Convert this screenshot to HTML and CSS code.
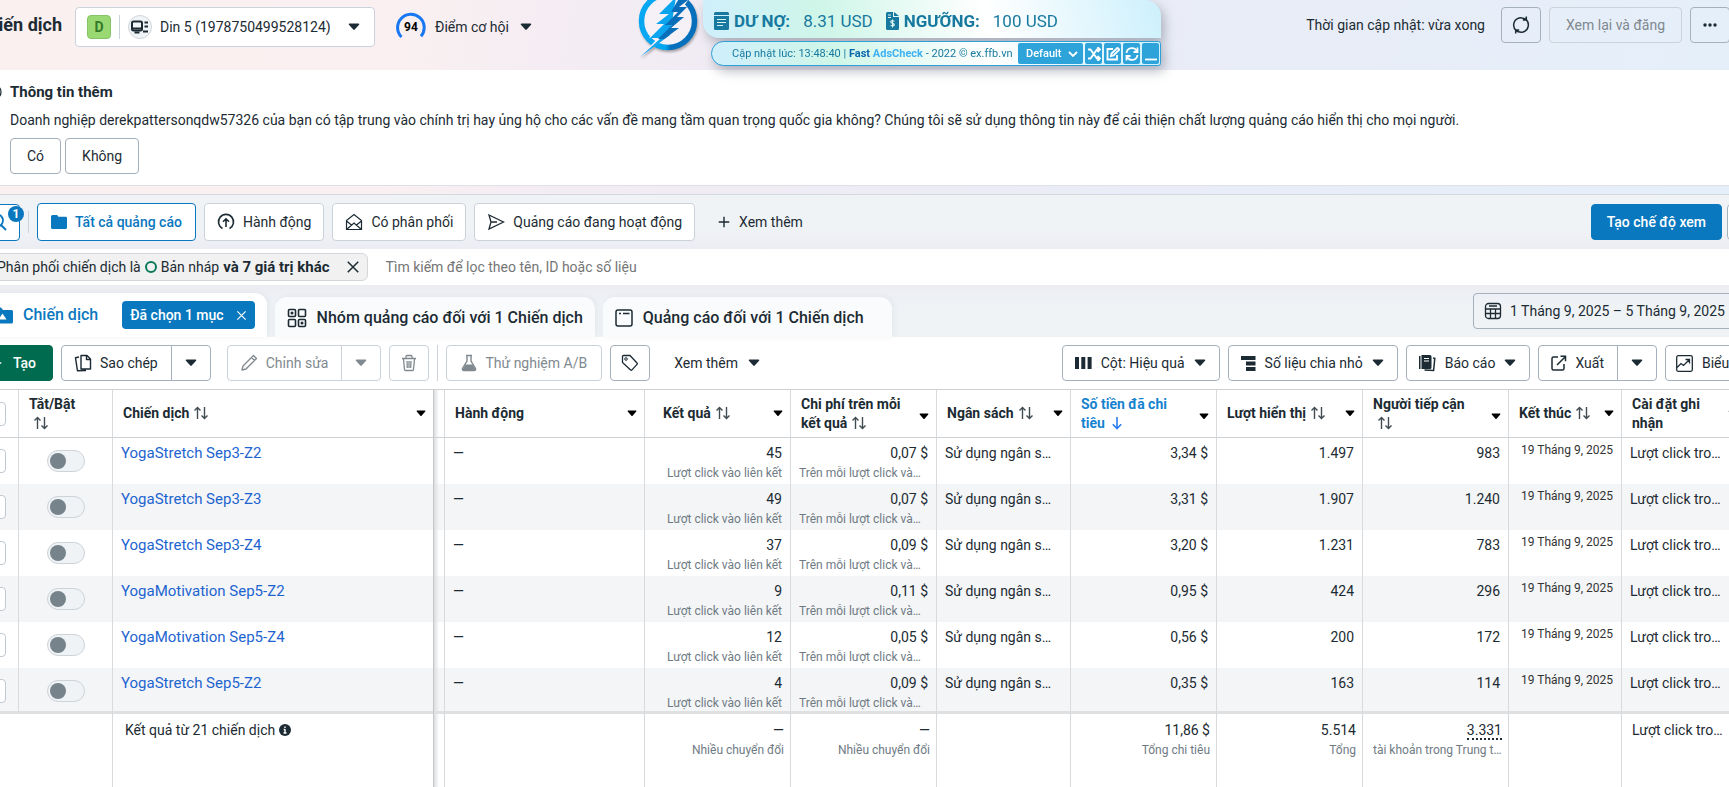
FILE: index.html
```html
<!DOCTYPE html>
<html lang="vi">
<head>
<meta charset="utf-8">
<title>Chiến dịch</title>
<link rel="stylesheet" href="styles.css">
</head>
<body>
<svg class="defs" aria-hidden="true">
  <symbol id="caret" viewBox="0 0 12 8"><path d="M1.5 0.5h9c.7 0 1 .8.6 1.2L6.7 6.6c-.4.4-1 .4-1.4 0L.9 1.7C.5 1.3.8.5 1.5.5z" fill="currentColor"/></symbol>
  <symbol id="sort" viewBox="0 0 16 16"><path d="M4.5 14V2.5M1.5 5.5l3-3 3 3M11.5 2v11.5M8.5 10.500l3 3 3-3" fill="none" stroke="currentColor" stroke-width="1.400"/></symbol>
  <symbol id="down" viewBox="0 0 16 16"><path d="M8 2v11.500M3.800 9.300L8 13.500l4.200-4.200" fill="none" stroke="currentColor" stroke-width="1.600"/></symbol>
  <symbol id="close" viewBox="0 0 16 16"><path d="M2 2l12 12M14 2L2 14" fill="none" stroke="currentColor" stroke-width="1.700"/></symbol>
  <symbol id="plus" viewBox="0 0 16 16"><path d="M8 2v12M2 8h12" fill="none" stroke="currentColor" stroke-width="1.600"/></symbol>
</svg>
<div class="viewport">
<div class="page">
  <header class="topbar">
    <h1>Chiến dịch</h1>
    <button class="account" type="button">
      <span class="avatar">D</span>
      <span class="rule"></span>
      <span class="kind"><svg width="18" height="14" viewBox="0 0 18 14"><rect x="1" y="1.500" width="10" height="9" rx="1.500" fill="none" stroke="currentColor" stroke-width="2"/><path d="M1 8.500h10M3.500 12.500h5M13.500 2.500h3.500M13.500 6.500h3.500M12 11.500h5" stroke="currentColor" stroke-width="1.800"/></svg></span>
      <span>Din 5 (1978750499528124)</span>
      <svg class="caret"><use href="#caret"/></svg>
    </button>
    <button class="score" type="button">
      <span class="dial"><svg width="30" height="30" viewBox="0 0 30 30"><path d="M5.500 25A13.300 13.300 0 1 1 25 24.200" fill="none" stroke="#1877f2" stroke-width="3"/></svg><b>94</b></span>
      <span>Điểm cơ hội</span>
      <svg class="caret"><use href="#caret"/></svg>
    </button>
    <div class="topbar-end">
      <span class="updated">Thời gian cập nhật: vừa xong</span>
      <button class="btn ghost square" type="button" aria-label="Làm mới"><svg width="18" height="18" viewBox="0 0 18 18"><path d="M4.500 14.800A7.300 7.300 0 0 1 7 2M13.500 3.200A7.300 7.300 0 0 1 11 16M10 1.900a7.300 7.300 0 0 1 3.500 1.300M8 16.100a7.300 7.300 0 0 1-3.500-1.300M7 2a7.300 7.300 0 0 1 3-.1M11 16a7.300 7.300 0 0 1-3 .1M14.300.500v3.600h-3.500M3.700 17.500v-3.600h3.500" fill="none" stroke="currentColor" stroke-width="1.500"/></svg></button>
      <button class="btn ghost light" type="button" disabled>Xem lại và đăng</button>
      <button class="btn ghost square" type="button" aria-label="Thêm"><svg width="14" height="4" viewBox="0 0 14 4"><circle cx="2" cy="2" r="1.700"/><circle cx="7" cy="2" r="1.700"/><circle cx="12" cy="2" r="1.700"/></svg></button>
    </div>
  </header>

  <aside class="checker">
    <svg class="logo" width="66" height="62" viewBox="636 0 66 62">
      <defs><linearGradient id="ring"><stop offset="0.450" stop-color="#05a7f2"/><stop offset="0.550" stop-color="#0670bd"/></linearGradient></defs>
      <circle cx="668" cy="21" r="26.500" fill="#f6f1f6" stroke="url(#ring)" stroke-width="5.500"/>
      <path d="M679-4L657 15h9l-12 10h7l-12 13h9L640 57l31-23h-6l15-9h-8l12-9h-7l14-20z" fill="#f6f1f6"/>
      <path d="M676-3L659 14h10L656 24h8l-14 14h11L640 57l30-22z" fill="#0ba5ef"/>
      <path d="M692-3H680l-9 15h7l-13 13h7L658 39h6L640 57l39-29h-8l13-11h-7l10-10h-8z" fill="#0a6db8"/>
    </svg>
    <div class="checker-panels">
      <div class="debt">
        <svg width="15" height="18" viewBox="0 0 15 18"><path d="M0 1.500Q0 0 1.500 0h12Q15 0 15 1.500V3H0zM0 4h15v12.500q0 1.500-1.500 1.500h-12Q0 18 0 16.500z" fill="currentColor"/><path d="M3 7.500h9M3 10.500h9M3 13.500h6" stroke="#d9f5f3" stroke-width="1.200"/></svg>
        <b>DƯ NỢ:</b><span>8.31 USD</span>
        <svg width="13" height="18" viewBox="0 0 13 18"><path d="M1.500 0H7v5h6v11.500q0 1.500-1.500 1.500h-10Q0 18 0 16.500v-15Q0 0 1.500 0zM8 0l5 4H8z" fill="currentColor"/><path d="M2 3h3M2 5.500h3M8.500 9.200Q5 8 4.700 9.800 4.700 11 6.500 11.400 8.500 11.900 8.300 13q-.5 1.500-3.800.4M6.500 7.500v8" fill="none" stroke="#e4f9f2" stroke-width="1.100"/></svg>
        <b>NGƯỠNG:</b><span>100 USD</span>
      </div>
      <div class="checker-bar">
        <span>Cập nhật lúc: 13:48:40 | <b>Fast <i>AdsCheck</i></b> - 2022 © ex.ffb.vn</span>
        <select aria-label="Chế độ"><option>Default</option></select>
        <button type="button" aria-label="Trộn"><svg viewBox="0 0 14 14"><path d="M1 2.500h2.500l6.500 9h3M1 11.500h2.500l6.500-9h3M10.500 0L13 2.500 10.500 5M10.500 9l2.500 2.500-2.500 2.500"/></svg></button>
        <button type="button" aria-label="Sửa"><svg viewBox="0 0 14 14"><path d="M7 2H1.500v10.500H11V8M5 9l.5-2.500L11.500.8l1.800 1.800L7.500 8.500z"/></svg></button>
        <button type="button" aria-label="Tải lại"><svg viewBox="0 0 14 14"><path d="M1.500 6A5.500 5.500 0 0 1 11.800 4M12.500 8A5.500 5.500 0 0 1 2.200 10M12.500.5V5H8.500M1.500 13.500V9h4"/></svg></button>
        <button type="button" aria-label="Thu nhỏ"><svg viewBox="0 0 14 14"><path d="M1 12.500h12"/></svg></button>
      </div>
    </div>
  </aside>

  <section class="notice">
    <svg class="info" width="16" height="16" viewBox="0 0 16 16"><circle cx="8" cy="8" r="7" fill="none" stroke="currentColor" stroke-width="1.300"/><path d="M8 7v4.500M8 4.200v1.300" stroke="currentColor" stroke-width="1.400"/></svg>
    <div>
      <h2>Thông tin thêm</h2>
      <p>Doanh nghiệp derekpattersonqdw57326 của bạn có tập trung vào chính trị hay ủng hộ cho các vấn đề mang tầm quan trọng quốc gia không? Chúng tôi sẽ sử dụng thông tin này để cải thiện chất lượng quảng cáo hiển thị cho mọi người.</p>
      <div class="answers"><button class="btn" type="button">Có</button><button class="btn" type="button">Không</button></div>
    </div>
  </section>

  <nav class="views">
    <button class="btn search" type="button" aria-label="Tìm kiếm, 1 bộ lọc"><svg width="18" height="18" viewBox="0 0 18 18"><circle cx="8" cy="7.500" r="6" fill="none" stroke="currentColor" stroke-width="1.800"/><path d="M12 12l5 5" stroke="currentColor" stroke-width="2"/></svg><span class="badge">1</span></button>
    <span class="rule"></span>
    <button class="btn view current" type="button"><svg width="16" height="16" viewBox="0 0 16 16"><path d="M0 2.500Q0 1 1.500 1h4Q6.500 1 7 2l.3.700h7.200Q16 2.700 16 4v9.500q0 1.500-1.500 1.500h-13Q0 15 0 13.500z" fill="currentColor"/></svg>Tất cả quảng cáo</button>
    <button class="btn view" type="button"><svg width="18" height="18" viewBox="0 0 18 18"><path d="M5.500 15.500A7.500 7.500 0 1 1 12.500 15.500M9 14V6M6 8.800l3-3 3 3" fill="none" stroke="currentColor" stroke-width="1.600"/></svg>Hành động</button>
    <button class="btn view" type="button"><svg width="18" height="18" viewBox="0 0 18 18"><path d="M1.500 7.500L9 1.500l7.500 6v9h-15zM1.500 8L6.500 12M16.500 8L11.500 12M1.500 16.500L9 10l7.500 6.500" fill="none" stroke="currentColor" stroke-width="1.200"/></svg>Có phân phối</button>
    <button class="btn view" type="button"><svg width="18" height="18" viewBox="0 0 18 18"><path d="M2 2l14.500 7L2 16l2-7zM4 9h6" fill="none" stroke="currentColor" stroke-width="1.300"/></svg>Quảng cáo đang hoạt động</button>
    <button class="more" type="button"><svg width="14" height="14"><use href="#plus"/></svg>Xem thêm</button>
    <button class="btn primary end" type="button">Tạo chế độ xem</button>
    <button class="btn stub" type="button" aria-label="Tùy chọn"></button>
  </nav>

  <div class="filters">
    <span class="chip">Phân phối chiến dịch là <span class="dot"></span> Bản nháp <b>và 7 giá trị khác</b><button type="button" aria-label="Xóa bộ lọc"><svg width="14" height="14"><use href="#close"/></svg></button></span>
    <input type="text" aria-label="Tìm kiếm" placeholder="Tìm kiếm để lọc theo tên, ID hoặc số liệu">
  </div>

  <div class="tabs">
    <div class="tab active"><svg width="18" height="17" viewBox="0 0 18 17"><path d="M0 2Q0 .5 1.500.5h4.500l2 2.500h8.500Q18 3 18 4.500v10.500q0 1.500-1.500 1.500h-15Q0 16.500 0 15z" fill="currentColor"/><path d="M3.500 12.500L7.500 6.500l4 6z" fill="#fff"/></svg><a href="#campaigns">Chiến dịch</a><button class="picked" type="button">Đã chọn 1 mục<svg width="11" height="11"><use href="#close"/></svg></button></div>
    <a class="tab" href="#adsets"><svg width="20" height="20" viewBox="0 0 20 20"><g fill="none" stroke="currentColor" stroke-width="1.600"><rect x="1.500" y="1.500" width="7" height="7" rx="1"/><rect x="11.500" y="1.500" width="7" height="7" rx="1"/><rect x="1.500" y="11.500" width="7" height="7" rx="1"/><rect x="11.500" y="11.500" width="7" height="7" rx="1"/></g><circle cx="5" cy="5" r="1.500"/><circle cx="15" cy="15" r="1.500"/></svg>Nhóm quảng cáo đối với 1 Chiến dịch</a>
    <a class="tab wide" href="#ads"><svg width="18" height="18" viewBox="0 0 18 18"><rect x="1" y="1" width="16" height="16" rx="2" fill="none" stroke="currentColor" stroke-width="1.500"/><path d="M4 4.500h2M8 4.500h6.500" stroke="currentColor" stroke-width="1.600"/></svg>Quảng cáo đối với 1 Chiến dịch</a>
    <button class="btn date" type="button"><svg width="18" height="18" viewBox="0 0 18 18"><rect x="1.500" y="1.500" width="15" height="15" rx="3" fill="none" stroke="currentColor" stroke-width="1.300"/><path d="M5 4h8M1.500 7h15M1.500 11.500h15M6.500 7v9.500M11.500 7v9.500" stroke="currentColor" stroke-width="1.300"/></svg>1 Tháng 9, 2025 – 5 Tháng 9, 2025</button>
  </div>

  <div class="toolbar">
    <button class="btn create" type="button"><svg width="14" height="14"><use href="#plus"/></svg>Tạo</button>
    <div class="split"><button class="btn" type="button"><svg width="18" height="18" viewBox="0 0 18 18"><path d="M7 1.500h6l3.500 3.500v10H7zM12.500 1.500V5.500h4M5 3L1.500 3.800l2 13 8.500-.300" fill="none" stroke="currentColor" stroke-width="1.400" stroke-linejoin="round"/></svg>Sao chép</button><button class="btn arrow" type="button" aria-label="Tùy chọn sao chép"><svg class="caret"><use href="#caret"/></svg></button></div>
    <div class="split gap"><button class="btn light" type="button" disabled><svg width="18" height="18" viewBox="0 0 18 18"><path d="M2 16l1-4L13.500 1.500l3 3L6 15zM11.500 3.500l3 3" fill="none" stroke="currentColor" stroke-width="1.300" stroke-linejoin="round"/></svg>Chỉnh sửa</button><button class="btn light arrow" type="button" disabled aria-label="Tùy chọn chỉnh sửa"><svg class="caret"><use href="#caret"/></svg></button></div>
    <button class="btn light square" type="button" disabled aria-label="Xóa"><svg width="16" height="18" viewBox="0 0 16 18"><path d="M1 4.500h14M5 4V2.500Q5 1.500 6 1.500h4q1 0 1 1V4M2.500 5l1 10.500q.1 1 1 1h7q.900 0 1-1L13.500 5M6 7l.300 7M10 7l-.300 7M8 7v7" fill="none" stroke="currentColor" stroke-width="1.300"/></svg></button>
    <span class="rule"></span>
    <button class="btn light test" type="button" disabled><svg width="16" height="18" viewBox="0 0 16 18"><path d="M5 1.500h6M6 2v5L1.500 14.500Q1 16.500 3 16.500h10q2 0 1.500-2L10 7V2" fill="none" stroke="currentColor" stroke-width="1.400"/><path d="M4.500 10.500h7l3 5-1.500 1.500H3L1.500 15.500z" fill="currentColor"/></svg>Thử nghiệm A/B</button>
    <button class="btn square" type="button" aria-label="Gắn thẻ"><svg width="18" height="18" viewBox="0 0 18 18"><path d="M1.500 2.500Q1.500 1.500 2.500 1.500H9l7 7.500q.700.700 0 1.400L11 15.900q-.700.700-1.400 0L1.500 8.500z" fill="none" stroke="currentColor" stroke-width="1.300"/><circle cx="5" cy="5" r="1.300" fill="none" stroke="currentColor"/></svg></button>
    <button class="more" type="button">Xem thêm<svg class="caret"><use href="#caret"/></svg></button>
    <div class="toolbar-end">
      <button class="btn" type="button"><svg width="17" height="12" viewBox="0 0 17 12"><path d="M0 0h4v12H0zM6.300 0h4v12h-4zM12.600 0h4v12h-4z"/></svg>Cột: Hiệu quả<svg class="caret"><use href="#caret"/></svg></button>
      <button class="btn" type="button"><svg width="15" height="15" viewBox="0 0 15 15"><path d="M0 0h14.500v4H0zM5 5.500h9.500v4H5zM5 11h9.500v4H5z"/></svg>Số liệu chia nhỏ<svg class="caret"><use href="#caret"/></svg></button>
      <button class="btn" type="button"><svg width="17" height="17" viewBox="0 0 17 17"><path d="M0 1h1.500v13H0zM2.500 0H11q1.500 0 1.500 1.500v11q0 1.500-1.500 1.500H2.500z"/><path d="M5 3.500h5M5 6h5" stroke="#fff" stroke-width="1.100"/><path d="M14 3l1.800.3-1.200 12.200L5.500 15" fill="none" stroke="currentColor" stroke-width="1.500"/></svg>Báo cáo<svg class="caret"><use href="#caret"/></svg></button>
      <div class="split"><button class="btn" type="button"><svg width="16" height="16" viewBox="0 0 16 16"><path d="M7 2H2.500Q1 2 1 3.500v10Q1 15 2.500 15h9q1.500 0 1.500-1.500V9M6 10l8.500-8.500M9.500 1.200h5v5" fill="none" stroke="currentColor" stroke-width="1.500"/></svg>Xuất</button><button class="btn arrow" type="button" aria-label="Tùy chọn xuất"><svg class="caret"><use href="#caret"/></svg></button></div>
      <button class="btn chart" type="button"><svg width="17" height="17" viewBox="0 0 17 17"><rect x="0.700" y="0.700" width="15.600" height="15.600" rx="1.500" fill="none" stroke="currentColor" stroke-width="1.300"/><path d="M1 12.500l4-4 2.500 2L13 5M9.500 4.500h4v4" fill="none" stroke="currentColor" stroke-width="1.300"/></svg>Biểu đồ</button>
    </div>
  </div>

  <table class="grid">
    <colgroup><col class="w-check"><col class="w-toggle"><col class="w-name"><col class="w-split"><col class="w-action"><col class="w-metric"><col class="w-metric"><col class="w-budget"><col class="w-metric"><col class="w-metric"><col class="w-metric"><col class="w-end"><col></colgroup>
    <thead>
      <tr>
        <th><input class="check" type="checkbox" aria-label="Chọn tất cả"></th>
        <th>Tắt/Bật<br><svg class="sort"><use href="#sort"/></svg></th>
        <th><div class="head"><span>Chiến dịch<svg class="sort"><use href="#sort"/></svg></span><svg class="caret"><use href="#caret"/></svg></div></th>
        <th class="freeze"></th>
        <th><div class="head"><span>Hành động</span><svg class="caret"><use href="#caret"/></svg></div></th>
        <th class="inset"><div class="head"><span>Kết quả<svg class="sort"><use href="#sort"/></svg></span><svg class="caret"><use href="#caret"/></svg></div></th>
        <th><div class="head two"><span>Chi phí trên mỗi<br>kết quả<svg class="sort"><use href="#sort"/></svg></span><svg class="caret"><use href="#caret"/></svg></div></th>
        <th><div class="head"><span>Ngân sách<svg class="sort"><use href="#sort"/></svg></span><svg class="caret"><use href="#caret"/></svg></div></th>
        <th class="sorted"><div class="head two"><span>Số tiền đã chi<br>tiêu<svg class="sort"><use href="#down"/></svg></span><svg class="caret"><use href="#caret"/></svg></div></th>
        <th><div class="head"><span>Lượt hiển thị<svg class="sort"><use href="#sort"/></svg></span><svg class="caret"><use href="#caret"/></svg></div></th>
        <th><div class="head two"><span>Người tiếp cận<br><svg class="sort"><use href="#sort"/></svg></span><svg class="caret"><use href="#caret"/></svg></div></th>
        <th><div class="head"><span>Kết thúc<svg class="sort"><use href="#sort"/></svg></span><svg class="caret"><use href="#caret"/></svg></div></th>
        <th><div class="head attribution"><span>Cài đặt ghi<br>nhận</span><svg class="caret"><use href="#caret"/></svg></div></th>
      </tr>
    </thead>
    <tbody>
      <tr><td><input class="check" type="checkbox" aria-label="Chọn YogaStretch Sep3-Z2"></td><td><input class="toggle" type="checkbox" role="switch" aria-label="Bật YogaStretch Sep3-Z2"></td><td><a href="#c1">YogaStretch Sep3-Z2</a></td><td class="freeze"></td><td>—</td><td class="num">45<small>Lượt click vào liên kết</small></td><td class="num">0,07 $<small class="cut">Trên mỗi lượt click vào liên kết</small></td><td class="cut budget">Sử dụng ngân sách nhóm</td><td class="num">3,34 $</td><td class="num">1.497</td><td class="num">983</td><td class="day">19 Tháng 9, 2025</td><td><div class="cut attribution">Lượt click trong vòng 7 ngày</div></td></tr>
      <tr><td><input class="check" type="checkbox" aria-label="Chọn YogaStretch Sep3-Z3"></td><td><input class="toggle" type="checkbox" role="switch" aria-label="Bật YogaStretch Sep3-Z3"></td><td><a href="#c2">YogaStretch Sep3-Z3</a></td><td class="freeze"></td><td>—</td><td class="num">49<small>Lượt click vào liên kết</small></td><td class="num">0,07 $<small class="cut">Trên mỗi lượt click vào liên kết</small></td><td class="cut budget">Sử dụng ngân sách nhóm</td><td class="num">3,31 $</td><td class="num">1.907</td><td class="num">1.240</td><td class="day">19 Tháng 9, 2025</td><td><div class="cut attribution">Lượt click trong vòng 7 ngày</div></td></tr>
      <tr><td><input class="check" type="checkbox" aria-label="Chọn YogaStretch Sep3-Z4"></td><td><input class="toggle" type="checkbox" role="switch" aria-label="Bật YogaStretch Sep3-Z4"></td><td><a href="#c3">YogaStretch Sep3-Z4</a></td><td class="freeze"></td><td>—</td><td class="num">37<small>Lượt click vào liên kết</small></td><td class="num">0,09 $<small class="cut">Trên mỗi lượt click vào liên kết</small></td><td class="cut budget">Sử dụng ngân sách nhóm</td><td class="num">3,20 $</td><td class="num">1.231</td><td class="num">783</td><td class="day">19 Tháng 9, 2025</td><td><div class="cut attribution">Lượt click trong vòng 7 ngày</div></td></tr>
      <tr><td><input class="check" type="checkbox" aria-label="Chọn YogaMotivation Sep5-Z2"></td><td><input class="toggle" type="checkbox" role="switch" aria-label="Bật YogaMotivation Sep5-Z2"></td><td><a href="#c4">YogaMotivation Sep5-Z2</a></td><td class="freeze"></td><td>—</td><td class="num">9<small>Lượt click vào liên kết</small></td><td class="num">0,11 $<small class="cut">Trên mỗi lượt click vào liên kết</small></td><td class="cut budget">Sử dụng ngân sách nhóm</td><td class="num">0,95 $</td><td class="num">424</td><td class="num">296</td><td class="day">19 Tháng 9, 2025</td><td><div class="cut attribution">Lượt click trong vòng 7 ngày</div></td></tr>
      <tr><td><input class="check" type="checkbox" aria-label="Chọn YogaMotivation Sep5-Z4"></td><td><input class="toggle" type="checkbox" role="switch" aria-label="Bật YogaMotivation Sep5-Z4"></td><td><a href="#c5">YogaMotivation Sep5-Z4</a></td><td class="freeze"></td><td>—</td><td class="num">12<small>Lượt click vào liên kết</small></td><td class="num">0,05 $<small class="cut">Trên mỗi lượt click vào liên kết</small></td><td class="cut budget">Sử dụng ngân sách nhóm</td><td class="num">0,56 $</td><td class="num">200</td><td class="num">172</td><td class="day">19 Tháng 9, 2025</td><td><div class="cut attribution">Lượt click trong vòng 7 ngày</div></td></tr>
      <tr><td><input class="check" type="checkbox" aria-label="Chọn YogaStretch Sep5-Z2"></td><td><input class="toggle" type="checkbox" role="switch" aria-label="Bật YogaStretch Sep5-Z2"></td><td><a href="#c6">YogaStretch Sep5-Z2</a></td><td class="freeze"></td><td>—</td><td class="num">4<small>Lượt click vào liên kết</small></td><td class="num">0,09 $<small class="cut">Trên mỗi lượt click vào liên kết</small></td><td class="cut budget">Sử dụng ngân sách nhóm</td><td class="num">0,35 $</td><td class="num">163</td><td class="num">114</td><td class="day">19 Tháng 9, 2025</td><td><div class="cut attribution">Lượt click trong vòng 7 ngày</div></td></tr>
    </tbody>
    <tfoot>
      <tr><td class="plain"></td><td></td><td>Kết quả từ 21 chiến dịch <svg class="tip" width="12" height="12" viewBox="0 0 12 12"><circle cx="6" cy="6" r="6"/><path d="M6 5v4M6 2.500v1.600M4.700 5.500H6M4.500 9h3" stroke="#fff" stroke-width="1.400"/></svg></td><td class="freeze"></td><td></td><td class="num">—<small>Nhiều chuyển đổi</small></td><td class="num">—<small>Nhiều chuyển đổi</small></td><td></td><td class="num">11,86 $<small>Tổng chi tiêu</small></td><td class="num">5.514<small>Tổng</small></td><td class="num"><span class="dotted">3.331</span><small class="cut">tài khoản trong Trung tâm tài khoản</small></td><td></td><td><div class="cut attribution">Lượt click trong vòng 7 ngày</div></td></tr>
    </tfoot>
  </table>
</div>
</div>
</body>
</html>
```
FILE: styles.css
```css
:root {
  --ink: #1c2b33;
  --muted: #6f7b83;
  --faint: #7f898f;
  --blue: #0a78be;
  --line: #a4b0bc;
  --line-light: #cbd2d9;
  --grid: #d8dbde;
}
* { box-sizing: border-box; }
body {
  margin: 0;
  font-family: Roboto, "Noto Sans", sans-serif;
  font-size: 14px;
  line-height: 20px;
  color: var(--ink);
  background: #fff;
}
h1, h2, p { margin: 0; }
button, input, select { font: inherit; color: inherit; margin: 0; }
button { background: none; border: 0; padding: 0; white-space: nowrap; }
a { color: inherit; text-decoration: none; }
svg { flex: none; fill: currentColor; }
.defs { display: none; }
.viewport { overflow: hidden; min-height: 100vh; }
.page { position: relative; margin: 0 -32px; background: linear-gradient(100deg, #fbf0f0 0, #faf0f1 24%, #f3ecf3 34%, #eaecf6 62%, #e4effa 100%) 0 0 / 100% 200px no-repeat; }
.caret { width: 12px; height: 8px; }
.rule { width: 1px; background: var(--line-light); }

.btn {
  display: inline-flex; align-items: center; justify-content: center; gap: 8px;
  height: 36px; padding: 0 12px;
  border: 1px solid var(--line); border-radius: 4px; background: #fff;
}
.btn.ghost { background: transparent; padding: 0 16px; }
.btn.light { border-color: var(--line-light); color: var(--faint); }
.btn.square { width: 40px; padding: 0; }
.btn.primary { background: var(--blue); border-color: var(--blue); color: #fff; font-weight: 500; padding: 0 15px; }

.topbar { display: flex; align-items: flex-start; height: 70px; padding: 7px 31px 0 0; }
.topbar h1 { width: 94px; margin-right: 13px; text-align: right; font-size: 18px; line-height: 36px; font-weight: 700; white-space: nowrap; }
.account { display: flex; align-items: center; gap: 8px; width: 300px; height: 40px; padding: 0 12px 0 11px; border: 1px solid #ccd2dc; border-radius: 4px; background: #fff; }
.account .caret { margin-left: auto; margin-right: 2px; }
.account .rule { height: 24px; }
.avatar { width: 24px; height: 24px; border: 1px solid #84c464; border-radius: 4px; background: #99d873; color: #357a28; font-weight: 700; line-height: 22px; text-align: center; }
.kind { display: grid; place-items: center; width: 24px; height: 24px; border: 1px solid #ced4da; border-radius: 50%; background: #f1f4f7; }
.score { display: flex; align-items: center; gap: 9px; height: 40px; margin-left: 21px; }
.score .caret { margin-left: 2px; }
.dial { display: grid; place-items: center; }
.dial > * { grid-area: 1 / 1; }
.dial svg { display: block; }
.dial b { font-size: 12px; line-height: 16px; color: #000; }
.topbar-end { display: flex; align-items: center; gap: 8px; margin-left: auto; }
.updated { margin-right: 8px; }

.checker { position: absolute; z-index: 2; left: 668px; top: 0; display: flex; align-items: flex-start; font-family: Roboto, sans-serif; color: #17799f; }
.checker .logo { filter: drop-shadow(1px 2px 1px rgba(0, 0, 0, .3)); }
.checker-panels { display: flex; flex-direction: column; align-items: flex-end; gap: 3px; margin-left: 1px; filter: drop-shadow(3px 5px 6px rgba(60, 70, 90, .38)); }
.debt, .checker-bar { background: linear-gradient(75deg, #cfeffc 0, #cff6e8 27%, #fff 62%, #cdf0fc 100%); }
.debt { display: flex; align-items: center; width: 458px; height: 38px; padding: 4px 10px 0 11px; border-radius: 0 16px 0 16px; font-size: 17px; }
.debt b { margin-left: 5px; font-weight: 700; }
.debt span { margin: 0 13px; }
.checker-bar { display: flex; align-items: center; gap: 2px; width: 450px; height: 25px; padding: 0 1px 0 20px; border: 1px solid #2da0d8; border-radius: 14px 3px 3px 14px; font-size: 11px; white-space: nowrap; }
.checker-bar > span { flex: 1; }
.checker-bar b { color: #0868ad; }
.checker-bar i { font-style: normal; color: #3fb2f4; }
.checker-bar select { flex: none; appearance: none; width: 65px; height: 21px; padding: 0 8px; border: 0; border-radius: 2px; color: #fff; font-weight: 500; background: url("data:image/svg+xml,%3Csvg xmlns='http://www.w3.org/2000/svg' viewBox='0 0 10 6'%3E%3Cpath d='M1 1l4 4 4-4' fill='none' stroke='white' stroke-width='1.800'/%3E%3C/svg%3E") 50px 8px / 10px 6px no-repeat #2ea3da; }
.checker-bar button { flex: none; display: grid; place-items: center; width: 17px; height: 21px; border-radius: 2px; background: #2ea3da; color: #fff; }
.checker-bar svg { width: 14px; height: 14px; fill: none; stroke: currentColor; stroke-width: 1.800; }

.notice { display: flex; gap: 8px; padding: 12px 16px 11px 18px; height: 116px; background: #fff; border-bottom: 1px solid #dfdfe8; }
.notice .info { margin: 2px 0; }
.notice h2 { font-size: 15px; line-height: 20px; font-weight: 700; }
.notice p { margin: 8px 0; white-space: nowrap; }
.answers { display: flex; gap: 4px; }
.answers .btn { padding: 0 16px; }

.views { display: flex; align-items: center; gap: 8px; height: 55px; margin-top: 8px; padding: 0 0 0 8px; border-top: 1px solid #d4d9df; background: linear-gradient(#f0f3f6 60%, #ecedf3); }
.views .search { position: relative; width: 44px; height: 37px; border-color: var(--blue); color: var(--blue); }
.badge { position: absolute; top: 1px; right: -5px; width: 16px; height: 16px; border-radius: 50%; background: var(--blue); color: #fff; font-size: 12px; font-weight: 700; line-height: 16px; text-align: center; }
.views .rule { height: 22px; }
.view { height: 38px; border-color: var(--line-light); }
.view.current { padding: 0 13px; border-color: var(--blue); color: var(--blue); font-weight: 500; }
.more { display: flex; align-items: center; gap: 8px; height: 36px; padding: 0 14px; }
.views .end { margin-left: auto; }
.views .stub { width: 34px; margin-left: -3px; }

.filters { display: flex; align-items: center; height: 36px; background: #fff; }
.chip { display: flex; align-items: center; gap: 4px; height: 28px; padding: 0 7px 0 28px; border: 1px solid #d4d6d8; border-radius: 6px; background: #f1f1f1; white-space: nowrap; }
.chip b { font-size: 15px; }
.chip .dot { width: 12px; height: 12px; border: 2px solid #0b7a5a; border-radius: 50%; }
.chip button { display: flex; margin-left: 12px; }
.filters input { flex: 1; height: 28px; margin-left: 18px; padding: 0; border: 0; outline: 0; background: none; }
.filters input::placeholder { color: #757575; opacity: 1; }

.tabs { display: flex; align-items: flex-end; gap: 8px; height: 52px; padding-left: 8px; background: linear-gradient(#ecedf3, #eff3f6 45%); }
.tab { display: flex; align-items: center; gap: 10px; height: 40px; padding: 2px 12px 0; border-radius: 12px 12px 0 0; background: #fafbfd; font-size: 16px; font-weight: 500; white-space: nowrap; box-shadow: 2px 0 6px rgba(40, 60, 80, .06); }
.tab.active { height: 44px; padding: 0 12px 0 19px; background: #fff; color: var(--blue); }
.tab.wide { padding-right: 28px; }
.picked { display: flex; align-items: center; gap: 12px; height: 28px; margin-left: 14px; padding: 0 8px; border-radius: 4px; background: var(--blue); color: #fff; font-size: 14px; font-weight: 500; }
.btn.date { width: 288px; margin: 0 0 8px auto; padding: 0 10px; justify-content: flex-start; background: transparent; }

.toolbar { display: flex; align-items: center; gap: 8px; height: 52px; background: #fff; }
.btn.create { width: 85px; justify-content: flex-end; gap: 10px; padding-right: 16px; border-color: #006b4e; background: #006b4e; color: #fff; font-weight: 500; }
.split { display: flex; }
.split .btn:first-child { border-radius: 4px 0 0 4px; padding-right: 13px; }
.split .arrow { width: 40px; margin-left: -1px; padding: 0; border-radius: 0 4px 4px 0; }
.split.gap { margin-left: 8px; }
.toolbar .rule { height: 36px; }
.toolbar .test { padding: 0 14px; }
.toolbar .more { gap: 10px; padding: 0 16px; }
.toolbar-end { display: flex; gap: 8px; margin-left: auto; }
.toolbar-end > .btn { gap: 9px; padding: 0 13px 0 12px; }
.toolbar-end > .chart { width: 96px; }

.grid { width: 100%; table-layout: fixed; border-collapse: separate; border-spacing: 0; background: #fff; border-top: 1px solid #cfd2d4; }
.w-check { width: 51px; }
.w-toggle { width: 94px; }
.w-name { width: 321px; }
.w-split { width: 11px; }
.w-action { width: 200px; }
.w-metric { width: 146px; }
.w-budget { width: 134px; }
.w-end { width: 113px; }
th, td { border-right: 1px solid var(--grid); text-align: left; }
th { height: 48px; padding: 0 10px; border-bottom: 1px solid #cfd2d4; font-weight: 700; line-height: 19px; vertical-align: middle; }
th:first-child, tbody td:first-child { padding: 0 0 0 14px; vertical-align: middle; }
th:nth-child(3), td:nth-child(3) { border-right-color: #c4c7ca; }
th.inset { padding-left: 18px; }
.head { display: flex; align-items: center; justify-content: space-between; white-space: nowrap; }
.head .caret { width: 10px; height: 7px; margin-right: -3px; color: #000; }
.head.two .caret { margin-top: 6px; }
.sort { width: 16px; height: 16px; margin-left: 4px; vertical-align: -3px; color: #404b52; }
.sorted { color: #1583cf; }
.sorted .sort { color: #2a7df0; }
.attribution { width: 97px; }
.head.attribution { width: 103px; }
td { height: 46px; padding: 5px 8px 0; vertical-align: top; }
td a { font-size: 15px; color: #1d64cf; }
td.num { text-align: right; }
td.budget { padding-right: 12px; }
tbody tr:nth-child(even) td { background-color: #f4f5f7; }
small { display: block; font-size: 12px; line-height: 20px; color: var(--muted); }
.cut { overflow: hidden; text-overflow: ellipsis; white-space: nowrap; }
tbody small.cut { padding-right: 6px; }
td.day { font-size: 12px; line-height: 14px; text-align: right; color: #333; }
th.freeze, td.freeze { padding: 0; background-image: linear-gradient(90deg, #dcdddf, rgba(255, 255, 255, 0) 5px); }
.check { appearance: none; display: block; width: 24px; height: 24px; border: 1px solid #c0c9d2; border-radius: 4px; background: #fff; }
tbody td:nth-child(2) { padding: 0; vertical-align: middle; }
.toggle { appearance: none; display: block; width: 38px; height: 22px; margin: 0 auto; padding: 2px; border: 1px solid #ccd3d9; border-radius: 11px; background: #f0f3f6; }
.toggle::before { content: ""; display: block; width: 16px; height: 16px; border-radius: 50%; background: #76838b; }
tbody tr:last-child td { box-shadow: inset 0 -3px 0 #dfe0e2; }
tfoot td { height: 73px; padding: 6px 6px 0 10px; }
tfoot td.plain { border-right-color: transparent; }
tfoot td:nth-child(3) { padding-left: 12px; }
.tip { vertical-align: -1px; }
.dotted { border-bottom: 2px dotted var(--ink); display: inline-block; line-height: 16px; }
```
